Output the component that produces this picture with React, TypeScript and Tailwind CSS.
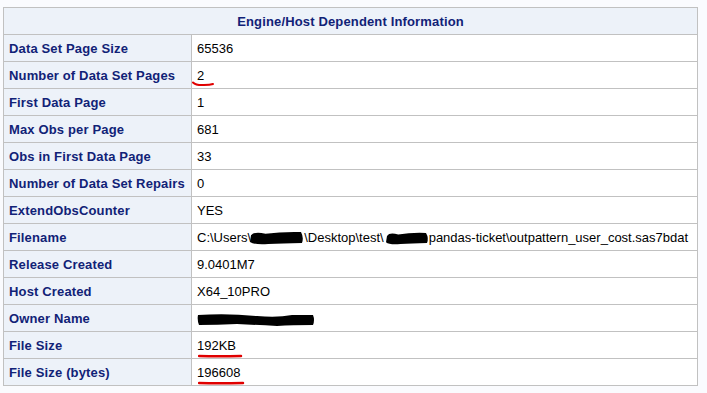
import React from "react";

function Blob({ w, h, className }: { w: number; h: number; className?: string }) {
  return (
    <svg width={w} height={h} viewBox={`0 0 ${w} ${h}`} className={className}>
      <path
        d={`M2 ${h * 0.35} Q ${w * 0.1} 1 ${w * 0.3} ${h * 0.25} Q ${w * 0.6} ${h * 0.1} ${w - 3} 2 Q ${w} ${h * 0.5} ${w - 2} ${h - 2} Q ${w * 0.6} ${h * 0.9} ${w * 0.35} ${h - 1} Q ${w * 0.1} ${h} 1 ${h * 0.8} Z`}
        fill="#000"
      />
    </svg>
  );
}

function OwnerBlob() {
  return (
    <svg width="118" height="14" viewBox="0 0 118 14" className="block">
      <path
        d="M1 2 Q 30 0 60 3 Q 80 5 95 2 L 116 2 Q 118 7 116 12 Q 95 12 80 13 Q 60 12 40 11 Q 20 12 2 12 Q 0 7 1 2 Z"
        fill="#000"
      />
    </svg>
  );
}

export default function App() {
  const data: { label: string; value: React.ReactNode; overlay?: React.ReactNode }[] = [
    { label: "Data Set Page Size", value: "65536" },
    {
      label: "Number of Data Set Pages",
      value: "2",
      overlay: (
        <svg className="absolute left-0 top-[19px]" width="24" height="6" viewBox="0 0 24 6">
          <path d="M1 1.5 Q 4 4.5 12 4 Q 18 4 21 3" stroke="#e00000" strokeWidth="2" fill="none" strokeLinecap="round" />
        </svg>
      ),
    },
    { label: "First Data Page", value: "1" },
    { label: "Max Obs per Page", value: "681" },
    { label: "Obs in First Data Page", value: "33" },
    { label: "Number of Data Set Repairs", value: "0" },
    { label: "ExtendObsCounter", value: "YES" },
    {
      label: "Filename",
      value: (
        <span className="inline-flex items-center whitespace-nowrap">
          <span>C:\Users\</span>
          <Blob w={55} h={15} className="-ml-[2px] mt-[1px]" />
          <span>\Desktop\test\</span>
          <Blob w={44} h={14} className="ml-[1px] mt-[1px]" />
          <span>pandas-ticket\outpattern_user_cost.sas7bdat</span>
        </span>
      ),
    },
    { label: "Release Created", value: "9.0401M7" },
    { label: "Host Created", value: "X64_10PRO" },
    {
      label: "Owner Name",
      value: (
        <span className="block mt-[3px]">
          <OwnerBlob />
        </span>
      ),
    },
    {
      label: "File Size",
      value: "192KB",
      overlay: (
        <svg className="absolute left-[6px] top-[22px]" width="45" height="4" viewBox="0 0 45 4">
          <path d="M1 2 Q 20 2.5 43 2" stroke="#e00000" strokeWidth="2.5" fill="none" strokeLinecap="round" />
        </svg>
      ),
    },
    {
      label: "File Size (bytes)",
      value: "196608",
      overlay: (
        <svg className="absolute left-[6px] top-[22px]" width="47" height="4" viewBox="0 0 47 4">
          <path d="M1 2 Q 20 2.5 45 2" stroke="#e00000" strokeWidth="2.5" fill="none" strokeLinecap="round" />
        </svg>
      ),
    },
  ];

  return (
    <div
      className="min-h-screen bg-[#fafbfe] pt-[7px] pl-[3px] text-[13px] leading-[15px]"
      style={{ fontFamily: '"Liberation Sans", Arial, sans-serif' }}
    >
      <div className="w-[695px] border-l border-t border-[#c1c1c1] grid grid-cols-[188px_506px]">
        <div className="col-span-2 h-[27px] border-r border-b border-[#c1c1c1] bg-[#edf2f9] flex items-center justify-center font-bold tracking-[0.15px] text-[#112277]">
          Engine/Host Dependent Information
        </div>
        {data.map((r) => (
          <React.Fragment key={r.label}>
            <div className="h-[27px] border-r border-b border-[#c1c1c1] bg-[#edf2f9] flex items-center pl-[5px] font-bold tracking-[0.15px] text-[#112277] whitespace-nowrap">
              {r.label}
            </div>
            <div className="relative h-[27px] border-r border-b border-[#c1c1c1] bg-white flex items-center pl-[5px] text-black">
              {r.value}
              {r.overlay}
            </div>
          </React.Fragment>
        ))}
      </div>
    </div>
  );
}
